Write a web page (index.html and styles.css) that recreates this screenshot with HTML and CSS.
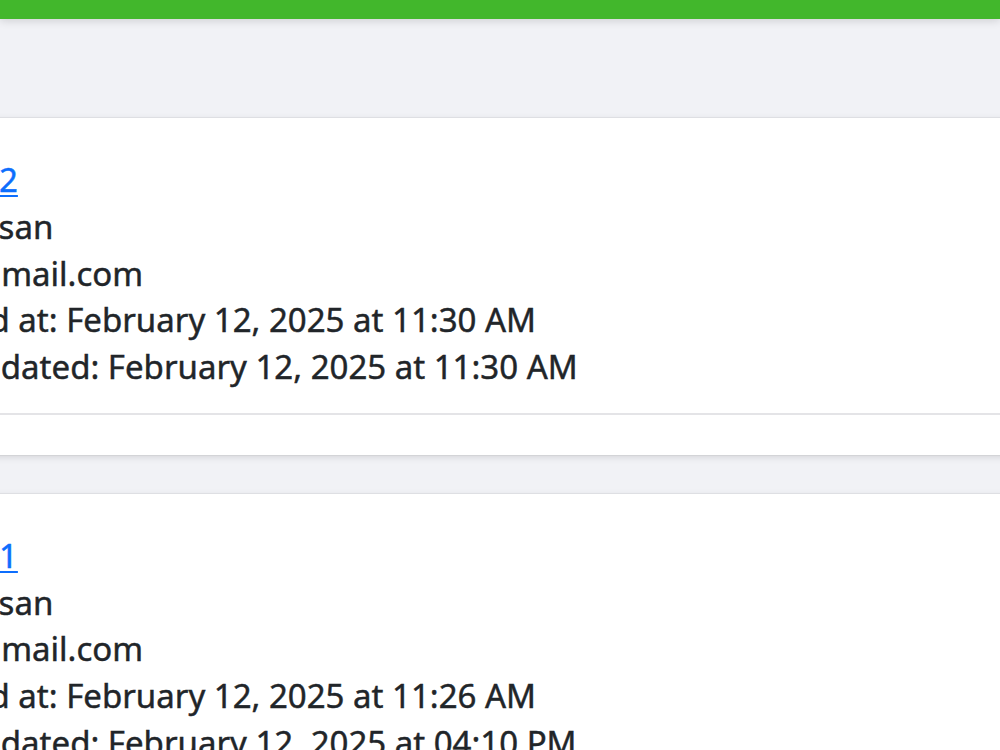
FILE: index.html
```html
<!DOCTYPE html>
<html>
<head>
<meta charset="utf-8">
<link rel="stylesheet" href="styles.css">
</head>
<body>
<header class="topbar"></header>
<main class="list">
  <article class="card">
    <div class="card-body">
      <div class="line"><a href="#" class="title">Entry #2</a></div>
      <div class="line">Md. Hasan</div>
      <div class="line">isan@gmail.com</div>
      <div class="line">Created at: February 12, 2025 at 11:30 AM</div>
      <div class="line">Last updated: February 12, 2025 at 11:30 AM</div>
    </div>
    <div class="card-footer"></div>
  </article>
  <article class="card">
    <div class="card-body">
      <div class="line"><a href="#" class="title">Entry #1</a></div>
      <div class="line">Md. Hasan</div>
      <div class="line">isan@gmail.com</div>
      <div class="line">Created at: February 12, 2025 at 11:26 AM</div>
      <div class="line">Last updated: February 12, 2025 at 04:10 PM</div>
    </div>
    <div class="card-footer"></div>
  </article>
</main>
</body>
</html>
```
FILE: styles.css
```css
html,body{margin:0;padding:0}
body{background:#f1f2f6;color:#212529;font-family:"Noto Sans","Open Sans",sans-serif;overflow:hidden}
.topbar{height:19px;background:#42b72c;box-shadow:0 2px 8px rgba(0,0,0,.14);position:relative;z-index:1}
.list{display:flex;flex-direction:column;gap:39px;padding-top:99px;margin:0 -40px 0 -152px}
.card{background:#fff;box-shadow:0 0 1px rgba(0,0,0,.25),0 2px 7px rgba(0,0,0,.13)}
.card-body{padding:39px 40px 22px}
.line{font-size:33px;line-height:46.75px;white-space:nowrap;-webkit-text-stroke:0.45px currentColor}
.title{color:#0d6efd;text-decoration:underline;text-decoration-thickness:2px;text-underline-offset:3px}
.card-footer{height:40px;border-top:2px solid #e4e4e7}
```
